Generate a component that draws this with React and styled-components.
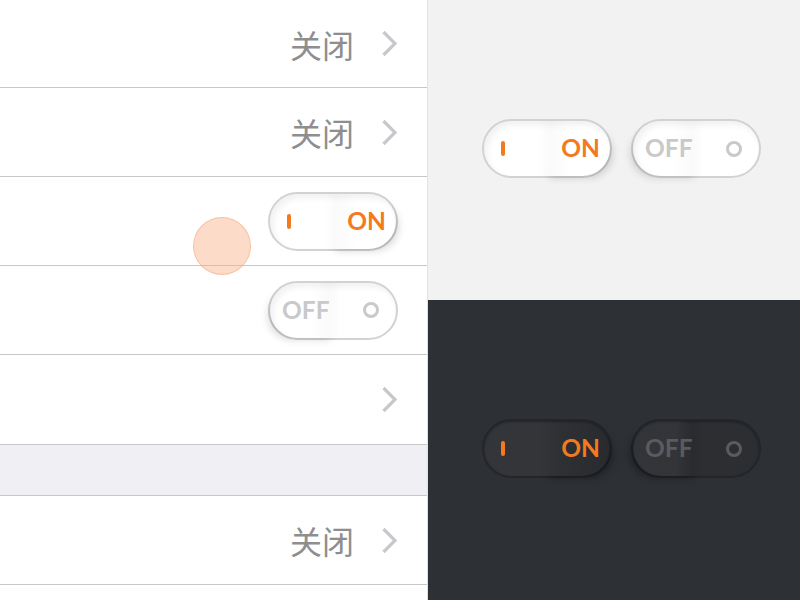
import React from "react";
import styled, { createGlobalStyle, css } from "styled-components";

const Global = createGlobalStyle`
  html, body { margin: 0; padding: 0; }
  body { width: 800px; height: 600px; overflow: hidden; font-family: "Noto Sans", "Noto Sans CJK SC", sans-serif; }
`;

const ORANGE = "#f47a20";

const Page = styled.div`
  display: grid;
  grid-template-columns: 428px 1fr;
  width: 800px;
  height: 600px;
  overflow: hidden;
`;

const List = styled.div`
  position: relative;
  background: #fff;
  border-right: 1px solid #e2e2e2;
  display: flex;
  flex-direction: column;
  overflow: hidden;
`;

const Row = styled.div`
  flex: 0 0 auto;
  height: ${(p) => p.$h || 88}px;
  border-bottom: 1px solid #c8c7cc;
  display: flex;
  align-items: center;
  justify-content: flex-end;
  padding-right: 29px;
  gap: 27px;
  background: ${(p) => (p.$section ? "#efeff4" : "#fff")};
`;

const Value = styled.span`
  font-family: "Noto Sans CJK SC", "Noto Sans", sans-serif;
  font-size: 32px;
  font-weight: 400;
  color: #8e8e8e;
  line-height: 1;
`;

const Chevron = () => (
  <svg width="17" height="27" viewBox="0 0 17 27">
    <path d="M2.5 2 L14 13.5 L2.5 25" fill="none" stroke="#c7c7cc" strokeWidth="3.2" />
  </svg>
);

const Touch = styled.div`
  position: absolute;
  left: 193px;
  top: 217px;
  width: 56px;
  height: 56px;
  border-radius: 50%;
  background: rgba(248, 178, 136, 0.45);
  border: 1px solid rgba(246, 170, 128, 0.55);
`;

const Side = styled.div`
  display: grid;
  grid-template-rows: 300px 300px;
`;

const Stage = styled.div`
  display: flex;
  align-items: center;
  justify-content: center;
  gap: 19px;
  padding-left: 15px;
  padding-bottom: 3px;
  background: ${(p) => (p.$dark ? "#2d3035" : "#f3f2f2")};
`;

const Track = styled.div`
  position: relative;
  box-sizing: border-box;
  width: 130px;
  height: 59px;
  border-radius: 30px;
  display: flex;
  align-items: center;
  justify-content: space-between;
  padding: 0 ${(p) => (p.$on ? 10 : 17)}px 0 ${(p) => (p.$on ? 17 : 12)}px;
  ${(p) =>
    p.$dark
      ? css`
          border: 2px solid #232529;
          background: ${p.$on ? "#333539" : "#2c2e32"};
          box-shadow: inset 0 1px 2px rgba(0, 0, 0, 0.3);
        `
      : css`
          border: 2px solid #d2d2d2;
          background: #fff;
          box-shadow: inset 3px 4px 6px rgba(0, 0, 0, 0.06);
        `}
`;

const Knob = styled.div`
  position: absolute;
  top: 0;
  bottom: 0;
  width: 56%;
  ${(p) =>
    p.$on
      ? css`
          right: 0;
          border-radius: 0 28px 28px 0;
        `
      : css`
          left: 0;
          border-radius: 28px 0 0 28px;
        `}
  ${(p) =>
    p.$dark
      ? css`
          background: ${p.$on
            ? "linear-gradient(90deg, rgba(0,0,0,0) 0%, rgba(0,0,0,0.1) 30%, rgba(0,0,0,0.2) 100%)"
            : "linear-gradient(90deg, rgba(255,255,255,0.03) 0%, rgba(255,255,255,0.03) 60%, rgba(0,0,0,0.08) 85%, rgba(0,0,0,0) 100%)"};
          box-shadow: ${p.$on
            ? "6px 5px 8px -4px rgba(0,0,0,0.4)"
            : "-6px 5px 8px -4px rgba(0,0,0,0.4)"};
        `
      : css`
          background: ${p.$on
            ? "linear-gradient(90deg, rgba(0,0,0,0) 0%, rgba(0,0,0,0.018) 15%, rgba(0,0,0,0) 45%)"
            : "linear-gradient(90deg, rgba(0,0,0,0) 55%, rgba(0,0,0,0.018) 85%, rgba(0,0,0,0) 100%)"};
          box-shadow: ${p.$on
            ? "6px 5px 8px -4px rgba(0,0,0,0.18)"
            : "-6px 5px 8px -4px rgba(0,0,0,0.16)"};
        `}
`;

const Label = styled.span`
  position: relative;
  font-family: Lato, "Open Sans", sans-serif;
  font-weight: 700;
  font-size: 24.5px;
  line-height: 1;
  color: ${(p) => (p.$on ? ORANGE : p.$dark ? "#595b5f" : "#c9c9c9")};
`;

const Bar = styled.span`
  position: relative;
  width: 4px;
  height: 15px;
  border-radius: 2px;
  background: ${ORANGE};
`;

const Ring = styled.span`
  position: relative;
  box-sizing: border-box;
  width: 16px;
  height: 16px;
  border-radius: 50%;
  border: 3px solid ${(p) => (p.$dark ? "#595b5f" : "#c9c9c9")};
`;

const Toggle = ({ on, dark }) => (
  <Track $on={on} $dark={dark}>
    <Knob $on={on} $dark={dark} />
    {on ? (
      <>
        <Bar />
        <Label $on $dark={dark}>ON</Label>
      </>
    ) : (
      <>
        <Label $dark={dark}>OFF</Label>
        <Ring $dark={dark} />
      </>
    )}
  </Track>
);

export default function App() {
  return (
    <Page>
      <Global />
      <List>
        <Row $h={87}>
          <Value>关闭</Value>
          <Chevron />
        </Row>
        <Row>
          <Value>关闭</Value>
          <Chevron />
        </Row>
        <Row>
          <Toggle on />
        </Row>
        <Row>
          <Toggle />
        </Row>
        <Row $h={89}>
          <Chevron />
        </Row>
        <Row $section $h={50} />
        <Row>
          <Value>关闭</Value>
          <Chevron />
        </Row>
        <Row />
        <Touch />
      </List>
      <Side>
        <Stage>
          <Toggle on />
          <Toggle />
        </Stage>
        <Stage $dark>
          <Toggle on dark />
          <Toggle dark />
        </Stage>
      </Side>
    </Page>
  );
}
